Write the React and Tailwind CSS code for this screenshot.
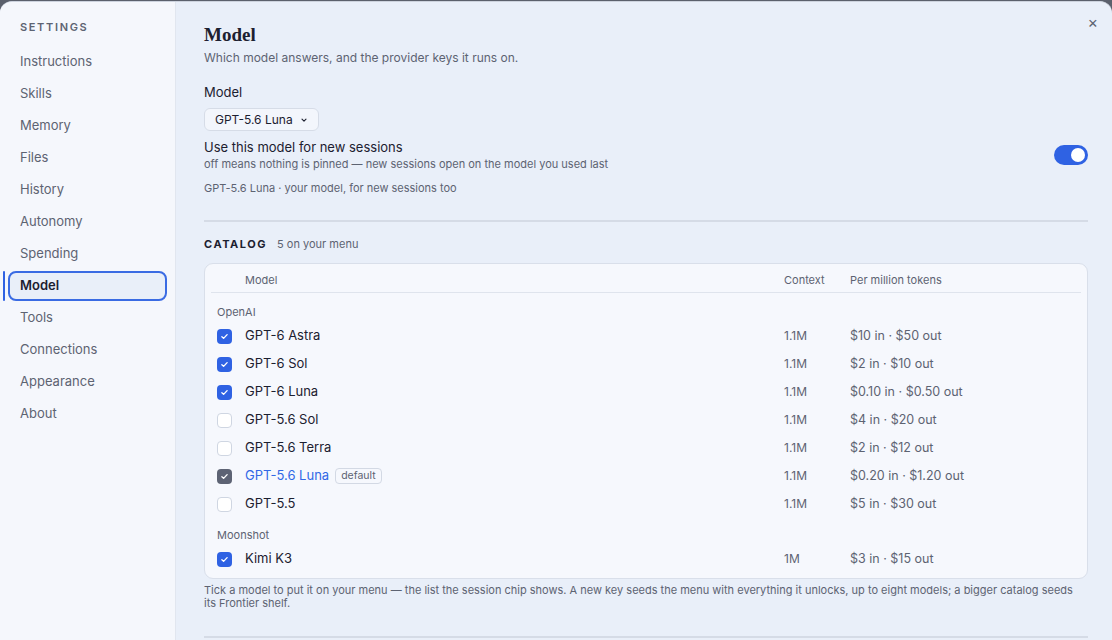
import React, { useState } from 'react'

const NAV = ['Instructions', 'Skills', 'Memory', 'Files', 'History', 'Autonomy', 'Spending', 'Model', 'Tools', 'Connections', 'Appearance', 'About']

const GROUPS = [
  {
    name: 'OpenAI',
    rows: [
      { name: 'GPT-6 Astra', ctx: '1.1M', price: '$10 in · $50 out', on: true },
      { name: 'GPT-6 Sol', ctx: '1.1M', price: '$2 in · $10 out', on: true },
      { name: 'GPT-6 Luna', ctx: '1.1M', price: '$0.10 in · $0.50 out', on: true },
      { name: 'GPT-5.6 Sol', ctx: '1.1M', price: '$4 in · $20 out', on: false },
      { name: 'GPT-5.6 Terra', ctx: '1.1M', price: '$2 in · $12 out', on: false },
      { name: 'GPT-5.6 Luna', ctx: '1.1M', price: '$0.20 in · $1.20 out', on: true, isDefault: true },
      { name: 'GPT-5.5', ctx: '1.1M', price: '$5 in · $30 out', on: false },
    ],
  },
  {
    name: 'Moonshot',
    rows: [{ name: 'Kimi K3', ctx: '1M', price: '$3 in · $15 out', on: true }],
  },
]

const Check = ({ on, locked }) => {
  if (!on) return <span className="w-[15px] h-[15px] rounded-[4px] border border-[#cfd6e2] bg-white shrink-0" />
  return (
    <span className={`w-[15px] h-[15px] rounded-[4px] flex items-center justify-center shrink-0 ${locked ? 'bg-[#5d6374]' : 'bg-[#2f62e3]'}`}>
      <svg viewBox="0 0 12 12" className="w-[9px] h-[9px]" fill="none" stroke="white" strokeWidth="1.8" strokeLinecap="round" strokeLinejoin="round">
        <path d="M2.5 6.3l2.3 2.2 4.7-5" />
      </svg>
    </span>
  )
}

export default function App() {
  const [pinned, setPinned] = useState(true)

  return (
    <div className="w-[1112px] h-[640px] bg-[#5b606c] overflow-hidden" style={{ fontFamily: 'Inter, "Noto Sans", sans-serif' }}>
      <div className="relative w-full h-[640px] mt-px rounded-t-[12px] overflow-hidden flex bg-[#e9eff9] border-t border-[#cdd3de]">
        {/* sidebar */}
        <aside className="w-[176px] shrink-0 bg-[#f5f7fc] border-r border-[#e1e6ef] pt-[17px]">
          <div className="px-5 text-[11px] font-semibold tracking-[0.15em] text-[#5d6372] leading-4 mb-[12px]">SETTINGS</div>
          <nav className="flex flex-col gap-[2px]">
            {NAV.map((item) => {
              const active = item === 'Model'
              return (
                <div key={item} className="relative h-[30px] flex items-center">
                  {active && <span className="absolute left-[3px] top-0 w-[2px] h-[30px] bg-[#2f62e3] rounded" />}
                  <div
                    className={`mx-2 flex-1 h-[30px] flex items-center rounded-lg text-[13px] ${
                      active ? 'border-2 border-[#3a6be3] bg-[#e9eff9] font-semibold text-[#1c2030] px-[10px]' : 'text-[#5d6372] px-3'
                    }`}
                  >
                    {item}
                  </div>
                </div>
              )
            })}
          </nav>
        </aside>

        {/* main */}
        <main className="flex-1 pl-7 pr-6 pt-[21px]">
          <button className="absolute right-[14px] top-[12px] text-[#5d6372] text-[16px] leading-4">×</button>
          <h1 className="text-[19px] font-bold text-[#1c2030] leading-6" style={{ fontFamily: '"Liberation Serif", "DejaVu Serif", serif' }}>Model</h1>
          <p className="text-[12px] text-[#5d6372] mt-[1px] leading-5">Which model answers, and the provider keys it runs on.</p>

          <div className="mt-[14px] text-[13px] text-[#1c2030] leading-5">Model</div>
          <button className="mt-[6px] h-[23px] px-[10px] flex items-center gap-[7px] rounded-md border border-[#d6dce7] bg-[#f3f6fc] text-[12px] text-[#1c2030]">
            GPT-5.6 Luna
            <svg viewBox="0 0 10 10" className="w-[8px] h-[8px]" fill="none" stroke="#1c2030" strokeWidth="1.4" strokeLinecap="round" strokeLinejoin="round">
              <path d="M2.5 4l2.5 2.5 2.5-2.5" />
            </svg>
          </button>

          <div className="mt-[7px] flex items-center justify-between">
            <div>
              <div className="text-[13px] text-[#1c2030] leading-[18px]">Use this model for new sessions</div>
              <div className="text-[11px] text-[#5d6372] leading-4">off means nothing is pinned — new sessions open on the model you used last</div>
            </div>
            <button
              onClick={() => setPinned(!pinned)}
              className={`w-[34px] h-[20px] rounded-full flex items-center px-[3px] ${pinned ? 'bg-[#2f62e3] justify-end' : 'bg-[#c9cfdb] justify-start'}`}
            >
              <span className="w-[14px] h-[14px] rounded-full bg-white" />
            </button>
          </div>
          <div className="mt-[8px] text-[11px] text-[#5d6372] leading-4">GPT-5.6 Luna · your model, for new sessions too</div>

          <div className="mt-[24px] h-[2px] bg-[#d5dbe6]" />

          <div className="mt-[14px] flex items-baseline gap-[10px] leading-4">
            <span className="text-[11px] font-bold tracking-[0.14em] text-[#1c2030]">CATALOG</span>
            <span className="text-[11px] text-[#5d6372]">5 on your menu</span>
          </div>

          <div className="mt-[11px] rounded-[9px] border border-[#d9dfea] bg-[#f6f8fd] px-[6px] pb-[5px]">
            <div className="flex items-center h-[29px] text-[11px] text-[#5d6372] border-b border-[#dfe4ed] pt-[4px]">
              <span className="w-[34px]" />
              <span className="flex-1">Model</span>
              <span className="w-[66px]">Context</span>
              <span className="w-[231px]">Per million tokens</span>
            </div>
            {GROUPS.map((g, gi) => (
              <div key={g.name} className={gi === 0 ? 'pt-[11px]' : 'pt-[9px]'}>
                <div className="pl-[6px] text-[11px] text-[#5d6372] leading-4 mb-[2px]">{g.name}</div>
                {g.rows.map((r) => (
                  <div key={r.name} className="flex items-center h-[28px]">
                    <span className="w-[34px] pl-[6px] flex"><Check on={r.on} locked={r.isDefault} /></span>
                    <span className="flex-1 flex items-center gap-[6px] text-[13px]">
                      <span className={r.isDefault ? 'text-[#3168e6]' : 'text-[#1c2030]'}>{r.name}</span>
                      {r.isDefault && (
                        <span className="text-[10.5px] text-[#5d6372] border border-[#d3d9e4] rounded-[4px] px-[5px] leading-[14px]">default</span>
                      )}
                    </span>
                    <span className="w-[66px] text-[12px] text-[#5d6372]">{r.ctx}</span>
                    <span className="w-[231px] text-[12.5px] text-[#5d6372]">{r.price}</span>
                  </div>
                ))}
              </div>
            ))}
          </div>

          <p className="mt-[5px] text-[11px] text-[#5d6372] leading-[13px] pr-[4px]">
            Tick a model to put it on your menu — the list the session chip shows. A new key seeds the menu with everything it unlocks, up to eight models; a bigger catalog seeds its Frontier shelf.
          </p>

          <div className="mt-[26px] h-[2px] bg-[#d5dbe6]" />
        </main>
      </div>
    </div>
  )
}
